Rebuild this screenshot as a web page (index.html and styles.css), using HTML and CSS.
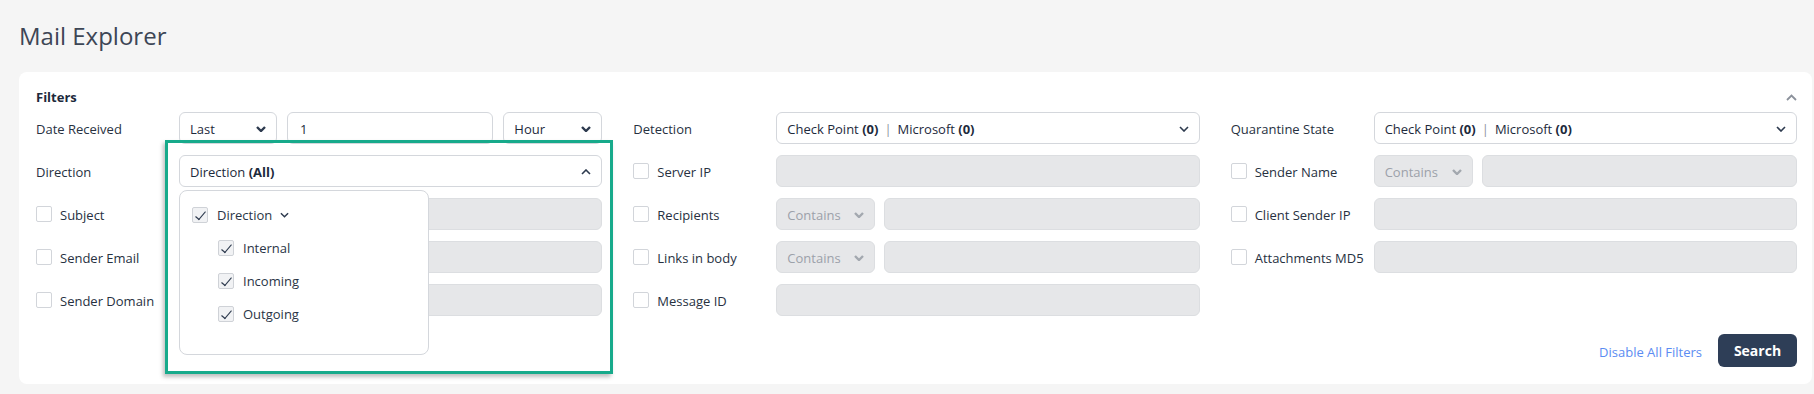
FILE: index.html
```html
<!DOCTYPE html>
<html lang="en">
<head>
  <meta charset="UTF-8">
  <title>Mail Explorer</title>
  <link rel="stylesheet" href="styles.css">
</head>
<body>
  <h1 class="title">Mail Explorer</h1>

  <div class="card">
    <div class="card-head">
      <span class="card-title">Filters</span>
      <svg class="collapse" width="11" height="7" viewBox="0 0 11 7"><polyline points="1,6 5.5,1.5 10,6" fill="none" stroke="#8b919b" stroke-width="1.8"/></svg>
    </div>

    <div class="grid">
      <!-- column 1 -->
      <div class="col">
        <div class="row">
          <div class="label">Date Received</div>
          <div class="ctrl">
            <div class="select w-last">Last<svg class="chev bold" viewBox="0 0 10 6"><polyline points="1,1 5,5 9,1"/></svg></div>
            <div class="input grow">1</div>
            <div class="select w-hour">Hour<svg class="chev bold" viewBox="0 0 10 6"><polyline points="1,1 5,5 9,1"/></svg></div>
          </div>
        </div>
        <div class="row">
          <div class="label">Direction</div>
          <div class="ctrl dir">
            <div class="select grow">
              <span>Direction <b>(All)</b></span>
              <svg class="chev" viewBox="0 0 10 6"><polyline points="1,5 5,1 9,5"/></svg>
            </div>
            <div class="menu">
              <div class="menu-item">
                <span class="check on"></span>Direction
                <svg class="chev small" viewBox="0 0 10 6"><polyline points="1,1 5,5 9,1"/></svg>
              </div>
              <div class="menu-item sub"><span class="check on"></span>Internal</div>
              <div class="menu-item sub"><span class="check on"></span>Incoming</div>
              <div class="menu-item sub"><span class="check on"></span>Outgoing</div>
            </div>
          </div>
        </div>
        <div class="row">
          <div class="label"><span class="check"></span>Subject</div>
          <div class="ctrl"><div class="input off grow"></div></div>
        </div>
        <div class="row">
          <div class="label"><span class="check"></span>Sender Email</div>
          <div class="ctrl"><div class="input off grow"></div></div>
        </div>
        <div class="row">
          <div class="label"><span class="check"></span>Sender Domain</div>
          <div class="ctrl"><div class="input off grow"></div></div>
        </div>
      </div>

      <!-- column 2 -->
      <div class="col">
        <div class="row">
          <div class="label">Detection</div>
          <div class="ctrl">
            <div class="select grow">
              <span>Check Point <b>(0)</b><i class="sep">|</i>Microsoft <b>(0)</b></span>
              <svg class="chev" viewBox="0 0 10 6"><polyline points="1,1 5,5 9,1"/></svg>
            </div>
          </div>
        </div>
        <div class="row">
          <div class="label"><span class="check"></span>Server IP</div>
          <div class="ctrl"><div class="input off grow"></div></div>
        </div>
        <div class="row">
          <div class="label"><span class="check"></span>Recipients</div>
          <div class="ctrl ctrl-tight">
            <div class="select off w-contains">Contains<svg class="chev bold" viewBox="0 0 10 6"><polyline points="1,1 5,5 9,1"/></svg></div>
            <div class="input off grow"></div>
          </div>
        </div>
        <div class="row">
          <div class="label"><span class="check"></span>Links in body</div>
          <div class="ctrl ctrl-tight">
            <div class="select off w-contains">Contains<svg class="chev bold" viewBox="0 0 10 6"><polyline points="1,1 5,5 9,1"/></svg></div>
            <div class="input off grow"></div>
          </div>
        </div>
        <div class="row">
          <div class="label"><span class="check"></span>Message ID</div>
          <div class="ctrl"><div class="input off grow"></div></div>
        </div>
      </div>

      <!-- column 3 -->
      <div class="col">
        <div class="row">
          <div class="label">Quarantine State</div>
          <div class="ctrl">
            <div class="select grow">
              <span>Check Point <b>(0)</b><i class="sep">|</i>Microsoft <b>(0)</b></span>
              <svg class="chev" viewBox="0 0 10 6"><polyline points="1,1 5,5 9,1"/></svg>
            </div>
          </div>
        </div>
        <div class="row">
          <div class="label"><span class="check"></span>Sender Name</div>
          <div class="ctrl ctrl-tight">
            <div class="select off w-contains">Contains<svg class="chev bold" viewBox="0 0 10 6"><polyline points="1,1 5,5 9,1"/></svg></div>
            <div class="input off grow"></div>
          </div>
        </div>
        <div class="row">
          <div class="label"><span class="check"></span>Client Sender IP</div>
          <div class="ctrl"><div class="input off grow"></div></div>
        </div>
        <div class="row">
          <div class="label"><span class="check"></span>Attachments MD5</div>
          <div class="ctrl"><div class="input off grow"></div></div>
        </div>
      </div>
    </div>

    <div class="card-foot">
      <a class="link">Disable All Filters</a>
      <button class="btn">Search</button>
    </div>
  </div>

  <div class="highlight"></div>
</body>
</html>
```

FILE: styles.css
```css
body {
  margin: 0;
  background: #f5f5f5;
  font-family: 'Open Sans', 'Noto Sans', sans-serif;
  font-size: 13px;
  color: #1d2a3c;
  position: relative;
}
.title {
  margin: 0;
  padding: 19px 0 0 19px;
  height: 34px;
  font-size: 24px;
  font-weight: 400;
  line-height: 34px;
  color: #3d4655;
}
.card {
  margin: 19px 2px 0 19px;
  background: white;
  border-radius: 8px;
  padding: 16px 15px 17px 17px;
}
.card-head {
  display: flex;
  justify-content: space-between;
  align-items: center;
  height: 18px;
  margin-bottom: 6px;
}
.card-title {
  font-weight: 700;
  font-size: 13px;
  color: #1d2a3c;
}
.grid {
  display: grid;
  grid-template-columns: 1fr 1fr 1fr;
  column-gap: 31px;
}
.col {
  display: flex;
  flex-direction: column;
  gap: 11px;
}
.row {
  display: flex;
  align-items: center;
  height: 32px;
}
.label {
  width: 143px;
  flex: none;
  display: flex;
  align-items: center;
  padding-top: 2px;
  color: #27313f;
  white-space: nowrap;
}
.label .check {
  margin-top: -2px;
  margin-right: 8px;
}
.ctrl {
  flex: 1;
  display: flex;
  gap: 10px;
  height: 32px;
  position: relative;
}
.ctrl-tight {
  gap: 9px;
}
.grow {
  flex: 1;
}
.select, .input {
  box-sizing: border-box;
  height: 32px;
  border: 1px solid #d4d7dc;
  border-radius: 6px;
  background: white;
  display: flex;
  align-items: center;
  justify-content: space-between;
  padding: 1px 10px 0;
  color: #1d2a3c;
}
.input {
  padding: 1px 12px 0;
}
.select b {
  font-weight: 700;
}
.sep {
  font-style: normal;
  color: #8d94a0;
  margin: 0 6px;
}
.off {
  background: #e6e7e9;
  border-color: #dcdee1;
  color: #9ca1a9;
}
.w-last {
  width: 98px;
  flex: none;
}
.w-hour {
  width: 99px;
  flex: none;
}
.w-contains {
  width: 99px;
  flex: none;
}
.chev {
  width: 10px;
  height: 6px;
  fill: none;
  stroke: #2d3a4e;
  stroke-width: 1.6;
}
.chev.bold {
  stroke-width: 2.4;
}
.off .chev {
  stroke: #a3a8af;
}
.chev.small {
  width: 9px;
  margin-left: 8px;
}
.check {
  box-sizing: border-box;
  width: 16px;
  height: 16px;
  border: 1.5px solid #d2d5da;
  border-radius: 2px;
  margin-right: 9px;
  flex: none;
  background: white;
  position: relative;
}
.check.on {
  background: #f1f2f4;
  border-color: #cfd2d7;
}
.check.on::after {
  content: '';
  position: absolute;
  left: 3px;
  top: 1px;
  width: 8px;
  height: 4px;
  border-left: 1.4px solid #2d3a4e;
  border-bottom: 1.4px solid #2d3a4e;
  transform: translate(0, 3px) rotate(-50deg) scaleX(1.2);
  transform-origin: center;
}
.menu {
  position: absolute;
  top: 35px;
  left: 0;
  width: 250px;
  height: 165px;
  box-sizing: border-box;
  background: white;
  border: 1px solid #d4d7dc;
  border-radius: 8px;
  padding: 16px 12px;
  z-index: 2;
}
.menu-item {
  display: flex;
  align-items: center;
  height: 16px;
  margin-bottom: 17px;
  color: #2a3546;
}
.menu-item.sub {
  padding-left: 26px;
}
.card-foot {
  display: flex;
  justify-content: flex-end;
  align-items: center;
  margin-top: 18px;
  gap: 16px;
}
.link {
  color: #5b8cf2;
  font-size: 13px;
  margin-top: 3px;
}
.btn {
  width: 79px;
  height: 33px;
  border: none;
  border-radius: 6px;
  background: #2e3e57;
  color: white;
  font-family: inherit;
  font-size: 14px;
  font-weight: 700;
}
.highlight {
  position: absolute;
  left: 165px;
  top: 140px;
  width: 448px;
  height: 234px;
  box-sizing: border-box;
  border: 3px solid #17aa8b;
  box-shadow: -2px 3px 4px rgba(0, 0, 0, 0.25);
  pointer-events: none;
  z-index: 3;
}
```
